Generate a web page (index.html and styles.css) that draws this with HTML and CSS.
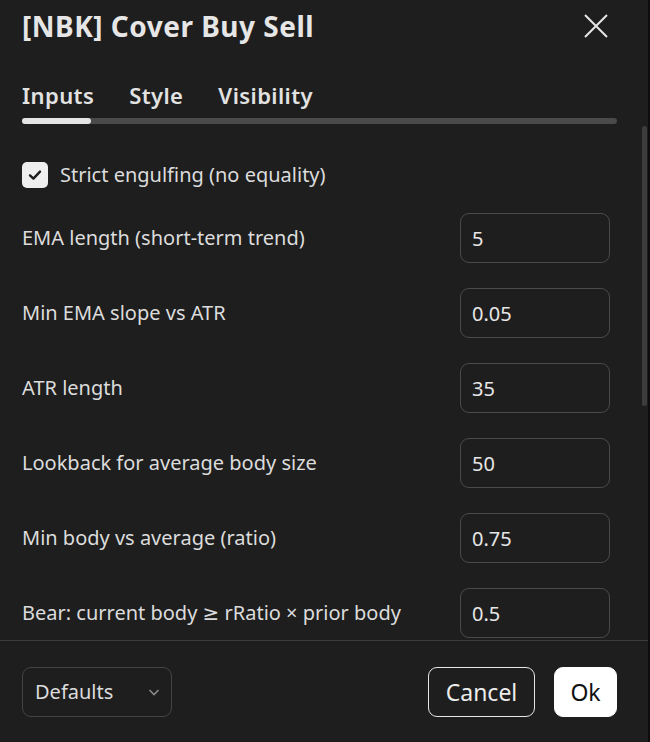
FILE: index.html
```html
<!DOCTYPE html>
<html lang="en">
<head>
<meta charset="utf-8">
<title>[NBK] Cover Buy Sell</title>
<link rel="stylesheet" href="styles.css">
</head>
<body>
<div class="dialog">
  <div class="header">
    <h1 class="title">[NBK] Cover Buy Sell</h1>
    <button class="close" aria-label="Close">
      <svg width="24" height="24" viewBox="0 0 24 24"><path d="M1 1 L23 23 M23 1 L1 23" stroke="#e6e6e6" stroke-width="2" fill="none"/></svg>
    </button>
  </div>
  <div class="tabs">
    <span class="tab">Inputs</span>
    <span class="tab">Style</span>
    <span class="tab">Visibility</span>
  </div>
  <div class="tabbar"><div class="tabbar-active"></div></div>
  <div class="body">
    <div class="scrollbar"></div>
    <div class="list">
      <label class="check-row">
        <span class="checkbox">
          <svg width="18" height="18" viewBox="0 0 18 18"><path d="M4 9.4 L7.4 12.6 L14 5.6" stroke="#1e1e1e" stroke-width="2.4" fill="none" stroke-linecap="round" stroke-linejoin="round"/></svg>
        </span>
        <span class="label">Strict engulfing (no equality)</span>
      </label>
      <div class="row"><span class="label">EMA length (short-term trend)</span><div class="input">5</div></div>
      <div class="row"><span class="label">Min EMA slope vs ATR</span><div class="input">0.05</div></div>
      <div class="row"><span class="label">ATR length</span><div class="input">35</div></div>
      <div class="row"><span class="label">Lookback for average body size</span><div class="input">50</div></div>
      <div class="row"><span class="label">Min body vs average (ratio)</span><div class="input">0.75</div></div>
      <div class="row"><span class="label">Bear: current body ≥ rRatio × prior body</span><div class="input">0.5</div></div>
    </div>
  </div>
  <div class="footer">
    <button class="defaults"><span>Defaults</span>
      <svg width="14" height="14" viewBox="0 0 14 14"><path d="M2.5 5 L7 9.5 L11.5 5" stroke="#8a8a8a" stroke-width="1.6" fill="none"/></svg>
    </button>
    <div class="actions">
      <button class="btn cancel">Cancel</button>
      <button class="btn ok">Ok</button>
    </div>
  </div>
</div>
</body>
</html>
```
FILE: styles.css
```css
* { box-sizing: border-box; }
html, body { margin: 0; padding: 0; }
body {
  background: #0c0c0c;
  width: 650px;
  height: 742px;
  overflow: hidden;
  font-family: "Noto Sans", "DejaVu Sans", sans-serif;
  color: #dedede;
}
.dialog {
  width: 648px;
  height: 742px;
  background: #1e1e1e;
  display: flex;
  flex-direction: column;
}
.header {
  height: 52px;
  display: flex;
  align-items: center;
  justify-content: space-between;
  padding: 0 40px 0 22px;
}
.title {
  margin: 0;
  font-size: 28px;
  line-height: 34px;
  font-weight: 700;
  color: #e6e6e6;
  letter-spacing: 0.5px;
}
.close {
  background: none;
  border: 0;
  padding: 0;
  width: 24px;
  height: 24px;
  display: flex;
}
.tabs {
  display: flex;
  gap: 35px;
  padding: 31px 22px 11px;
}
.tab {
  font-size: 22px;
  line-height: 24px;
  font-weight: 600;
  color: #e2e2e2;
  letter-spacing: 0.4px;
}
.tabbar {
  margin: 0 31px 0 22px;
  height: 6px;
  border-radius: 3px;
  background: #4a4a4a;
}
.tabbar-active {
  width: 69px;
  height: 6px;
  border-radius: 3px;
  background: #e4e4e4;
}
.body {
  position: relative;
  height: 517px;
  overflow: hidden;
  border-bottom: 1px solid #3c3c3c;
}
.scrollbar {
  position: absolute;
  left: 642px;
  top: 2px;
  width: 5px;
  height: 280px;
  border-radius: 3px;
  background: #3d3d3d;
}
.list {
  display: flex;
  flex-direction: column;
  gap: 25px;
  padding: 38px 38px 0 22px;
}
.check-row {
  display: flex;
  align-items: center;
  gap: 12px;
  height: 26px;
}
.checkbox {
  width: 26px;
  height: 26px;
  border-radius: 5px;
  background: #efefef;
  display: flex;
  align-items: center;
  justify-content: center;
  flex-shrink: 0;
}
.label {
  font-size: 20px;
  line-height: 26px;
  color: #dcdcdc;
}
.row {
  display: flex;
  align-items: center;
  justify-content: space-between;
  height: 50px;
}
.input {
  width: 150px;
  height: 50px;
  border: 1px solid #4a4a4a;
  border-radius: 9px;
  padding: 0 11px;
  display: flex;
  align-items: center;
  font-size: 20px;
  color: #e6e6e6;
  flex-shrink: 0;
}
.footer {
  flex: 1;
  display: flex;
  justify-content: space-between;
  align-items: flex-start;
  padding: 26px 31px 0 22px;
}
.defaults {
  width: 150px;
  height: 50px;
  background: transparent;
  border: 1px solid #444;
  border-radius: 9px;
  display: flex;
  align-items: center;
  justify-content: space-between;
  padding: 0 10px 0 12px;
  font-family: inherit;
  font-size: 20px;
  line-height: 26px;
  color: #dcdcdc;
}
.actions {
  display: flex;
  gap: 19px;
}
.btn {
  height: 50px;
  border-radius: 9px;
  font-family: inherit;
  font-size: 23px;
  line-height: 28px;
  padding: 0;
}
.cancel {
  width: 107px;
  background: transparent;
  border: 1px solid #e6e6e6;
  color: #ececec;
}
.ok {
  width: 63px;
  background: #ffffff;
  border: 1px solid #ffffff;
  color: #111;
}
```
